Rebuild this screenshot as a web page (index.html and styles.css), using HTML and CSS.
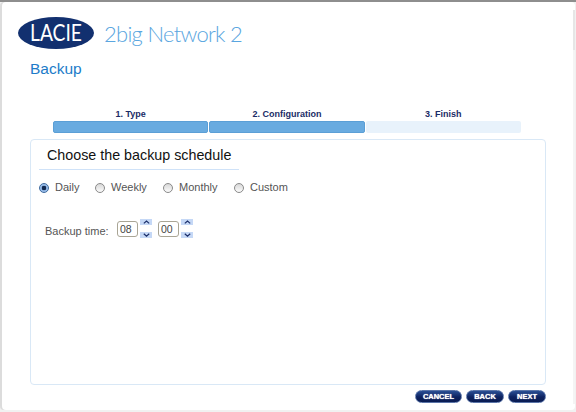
FILE: index.html
```html
<!DOCTYPE html>
<html lang="en">
<head>
<meta charset="utf-8">
<title>Backup</title>
<link rel="stylesheet" href="styles.css">
</head>
<body>
<div class="window">
  <header class="brand">
    <svg class="logo" width="76" height="32" viewBox="0 0 76 32" aria-label="LaCie">
      <ellipse cx="38" cy="16" rx="38" ry="16" fill="#12306f"/>
      <text x="38" y="24" text-anchor="middle" class="logo-text" textLength="52" lengthAdjust="spacingAndGlyphs">LACIE</text>
    </svg>
    <span class="product">2big Network 2</span>
  </header>
  <h1 class="page-title">Backup</h1>
  <div class="steps">
    <div class="step"><div class="step-label">1. Type</div><div class="step-bar done"></div></div>
    <div class="step"><div class="step-label">2. Configuration</div><div class="step-bar done"></div></div>
    <div class="step"><div class="step-label">3. Finish</div><div class="step-bar"></div></div>
  </div>
  <section class="panel">
    <h2 class="panel-title">Choose the backup schedule</h2>
    <div class="radios">
      <span class="radio-item r1"><span class="radio on"></span>Daily</span>
      <span class="radio-item r2"><span class="radio"></span>Weekly</span>
      <span class="radio-item r3"><span class="radio"></span>Monthly</span>
      <span class="radio-item"><span class="radio"></span>Custom</span>
    </div>
    <div class="time-row">
      <span class="time-label">Backup time:</span>
      <span class="time-box">08</span>
      <span class="spin"><span class="spin-btn"><svg width="7" height="4" viewBox="0 0 7 4"><path d="M0.8 3.4 3.5 1 6.2 3.4" fill="none" stroke="#1c2f6b" stroke-width="1.2"/></svg></span><span class="spin-btn"><svg width="7" height="4" viewBox="0 0 7 4"><path d="M0.8 0.8 3.5 3.2 6.2 0.8" fill="none" stroke="#1c2f6b" stroke-width="1.2"/></svg></span></span>
      <span class="time-box">00</span>
      <span class="spin"><span class="spin-btn"><svg width="7" height="4" viewBox="0 0 7 4"><path d="M0.8 3.4 3.5 1 6.2 3.4" fill="none" stroke="#1c2f6b" stroke-width="1.2"/></svg></span><span class="spin-btn"><svg width="7" height="4" viewBox="0 0 7 4"><path d="M0.8 0.8 3.5 3.2 6.2 0.8" fill="none" stroke="#1c2f6b" stroke-width="1.2"/></svg></span></span>
    </div>
  </section>
  <footer class="actions">
    <span class="btn b-cancel">CANCEL</span>
    <span class="btn b-back">BACK</span>
    <span class="btn b-next">NEXT</span>
  </footer>
</div>
<div class="edge-thumb"></div>
<div class="edge-track"></div>
</body>
</html>
```
FILE: styles.css
```css
* { box-sizing: border-box; }
html, body { margin: 0; height: 100%; }
body {
  position: relative;
  width: 576px;
  height: 412px;
  overflow: hidden;
  background: #f1f1f1;
  border-top: 2px solid #8e8e8e;
  font-family: "Liberation Sans", Arial, sans-serif;
}
.window {
  width: 573px;
  height: 408px;
  margin-left: 2px;
  background: #fff;
  border-radius: 4px;
  box-shadow: -2px 0 0 #dcdcdc;
  padding: 15px 0 0 16px;
  display: flex;
  flex-direction: column;
}
.edge-thumb {
  position: absolute;
  left: 573px;
  top: 8px;
  width: 2px;
  height: 40px;
  background: #e6e6e6;
}
.edge-track {
  position: absolute;
  left: 573px;
  top: 48px;
  width: 2px;
  height: 354px;
  background: #f4f4f4;
}
.brand { display: flex; align-items: center; height: 32px; }
.logo { flex: none; display: block; }
.logo-text {
  font-family: "Lato", "Liberation Sans", sans-serif;
  font-size: 23px;
  fill: #fff;
}
.product {
  margin-left: 10px;
  font-family: "Lato", "Liberation Sans", sans-serif;
  font-weight: 300;
  font-size: 22px;
  letter-spacing: -0.72px;
  color: #5aa6e0;
  white-space: nowrap;
}
.page-title {
  margin: 10px 0 0 12px;
  font-size: 15.5px;
  line-height: 20px;
  font-weight: 400;
  color: #1d7cc9;
}
.steps { display: flex; gap: 1px; margin: 29px 0 0 35px; width: 468px; }
.step { flex: 1; }
.step-label {
  font-size: 9px;
  font-weight: 700;
  line-height: 12px;
  color: #1a2c66;
  text-align: center;
  margin-bottom: 1px;
}
.step-bar {
  height: 12px;
  background: #e8f2fb;
  border-radius: 2px;
}
.step-bar.done { background: #69abe0; border: 1px solid #5b9fd6; }
.panel {
  width: 516px;
  height: 246px;
  margin: 6px 0 0 12px;
  border: 1px solid #d9e8f6;
  border-radius: 4px;
  padding: 0 0 0 8px;
  flex: none;
}
.panel-title {
  margin: 0;
  width: 200px;
  height: 30px;
  padding: 6px 0 0 8px;
  border-bottom: 1px solid #cfe2f8;
  font-size: 14.3px;
  line-height: 18px;
  font-weight: 400;
  color: #111;
  white-space: nowrap;
}
.radios {
  display: flex;
  margin-top: 11px;
  font-size: 11px;
  line-height: 13px;
  color: #555;
}
.radio-item { display: flex; align-items: center; white-space: nowrap; }
.r1 { width: 56px; }
.r2 { width: 68px; }
.r3 { width: 71px; }
.radio {
  width: 10px;
  height: 10px;
  border-radius: 50%;
  margin-right: 6px;
  border: 1px solid #8a8a8a;
  background: linear-gradient(#d8d8d8, #fbfbfb);
}
.radio.on {
  border-color: #3e6a9e;
  background: radial-gradient(circle, #13294f 0 2px, #8fb6e6 2.6px, #b6d0f0 100%);
}
.time-row {
  display: flex;
  align-items: center;
  margin: 25px 0 0 6px;
  font-size: 11px;
  color: #555;
}
.time-label { width: 72px; margin-top: 4px; white-space: nowrap; }
.time-box {
  width: 21px;
  height: 16px;
  border: 1px solid #a9a595;
  border-radius: 3px;
  padding-left: 2px;
  font-size: 10.5px;
  line-height: 14px;
  color: #444;
}
.spin {
  display: flex;
  flex-direction: column;
  gap: 7px;
  width: 12px;
  margin: 0 6px 0 2px;
}
.spin-btn {
  height: 6px;
  background: #c5d8f6;
  display: flex;
  align-items: center;
  justify-content: center;
}
.actions {
  display: flex;
  gap: 4px;
  margin: 5px 0 0 397px;
}
.btn {
  height: 13px;
  border-radius: 7px;
  background: linear-gradient(#2a4f95, #0d2260 55%, #0a1c52);
  border: 1px solid #5a74a8;
  color: #fff;
  font-size: 7.5px;
  font-weight: 700;
  line-height: 11px;
  text-align: center;
  text-shadow: 0 0 1px #fff;
}
.b-cancel { width: 47px; }
.b-back { width: 38px; }
.b-next { width: 38px; }
```
